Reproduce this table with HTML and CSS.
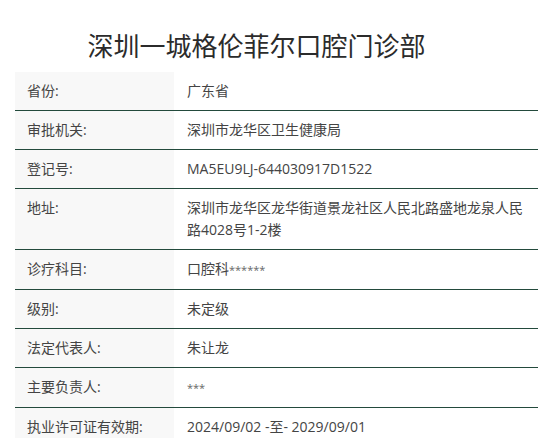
FILE: index.html
```html
<!DOCTYPE html>
<html lang="zh">
<head>
<meta charset="utf-8">
<link rel="stylesheet" href="styles.css">
</head>
<body>
<div class="page">
  <h1 class="title">深圳一城格伦菲尔口腔门诊部</h1>
  <div class="info">
    <div class="row"><div class="label">省份:</div><div class="value">广东省</div></div>
    <div class="row"><div class="label">审批机关:</div><div class="value">深圳市龙华区卫生健康局</div></div>
    <div class="row"><div class="label">登记号:</div><div class="value">MA5EU9LJ-644030917D1522</div></div>
    <div class="row"><div class="label">地址:</div><div class="value">深圳市龙华区龙华街道景龙社区人民北路盛地龙泉人民路4028号1-2楼</div></div>
    <div class="row"><div class="label">诊疗科目:</div><div class="value">口腔科<span class="stars">******</span></div></div>
    <div class="row"><div class="label">级别:</div><div class="value">未定级</div></div>
    <div class="row"><div class="label">法定代表人:</div><div class="value">朱让龙</div></div>
    <div class="row"><div class="label">主要负责人:</div><div class="value"><span class="stars">***</span></div></div>
    <div class="row"><div class="label">执业许可证有效期:</div><div class="value">2024/09/02 -至- 2029/09/01</div></div>
  </div>
</div>
</body>
</html>
```
FILE: styles.css
```css
html, body {
  margin: 0;
  padding: 0;
  background: #ffffff;
}
body {
  font-family: "Open Sans", "Noto Sans CJK SC", sans-serif;
  color: #333333;
}
.page {
  padding: 0 20px 0 15px;
}
.title {
  margin: 0 0 10px 0;
  padding: 28px 40px 0 0;
  font-size: 26px;
  line-height: 34px;
  font-weight: normal;
  text-align: center;
  color: #2b2b2b;
  font-family: "Noto Sans CJK SC", sans-serif;
}
.info {
  width: 523px;
}
.row {
  display: flex;
  border-bottom: 1px solid #234a3c;
  font-size: 14px;
  line-height: 22px;
}
.label {
  width: 147px;
  flex: none;
  padding: 8px 0 8px 12px;
  background: #f8f8f8;
  color: #444444;
}
.value {
  flex: 1;
  padding: 8px 12px 8px 13px;
  color: #444444;
}
.stars {
  font-size: 11px;
  color: #666666;
}
```
